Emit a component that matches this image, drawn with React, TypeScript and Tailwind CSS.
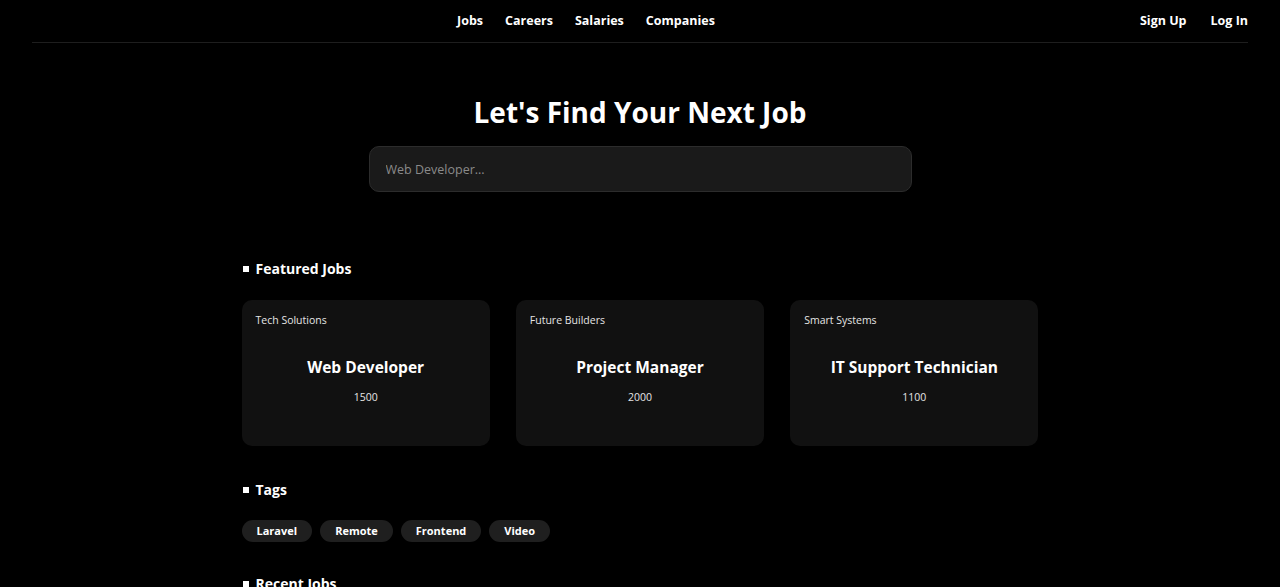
const jobs = [
  { company: "Tech Solutions", title: "Web Developer", salary: "1500" },
  { company: "Future Builders", title: "Project Manager", salary: "2000" },
  { company: "Smart Systems", title: "IT Support Technician", salary: "1100" },
];

const tags = ["Laravel", "Remote", "Frontend", "Video"];

function SectionTitle({ children }: { children: string }) {
  return (
    <h2 className="flex items-center gap-[7px] text-[14px] font-bold text-white leading-none">
      <span className="w-[6px] h-[6px] bg-white ml-px" />
      {children}
    </h2>
  );
}

export default function App() {
  return (
    <main
      className="min-h-screen bg-black text-white"
      style={{ fontFamily: '"Open Sans", "Noto Sans", sans-serif' }}
    >
      {/* Header */}
      <header className="px-8">
        <div className="flex justify-between items-center h-[43px] border-b border-[#1e1e1e]">
          <div />
          <nav className="flex gap-[22px] text-[12.5px] font-bold">
            <a>Jobs</a>
            <a>Careers</a>
            <a>Salaries</a>
            <a>Companies</a>
          </nav>
          <div className="flex gap-[24px] text-[12.5px] font-bold">
            <a>Sign Up</a>
            <a>Log In</a>
          </div>
        </div>
      </header>

      {/* Hero */}
      <section className="flex flex-col items-center pt-[55px]">
        <h1 className="text-[28px] font-bold leading-none">Let's Find Your Next Job</h1>
        <input
          placeholder="Web Developer..."
          className="mt-[20px] w-[543px] h-[46px] px-4 rounded-[10px] bg-[#1a1a1a] border border-[#2c2c2c] text-[12.5px] text-white placeholder:text-[#8a8a8a] outline-none"
        />
      </section>

      {/* Content */}
      <div className="w-[797px] mx-auto pt-[70px]">
        <SectionTitle>Featured Jobs</SectionTitle>
        <div className="grid grid-cols-3 gap-[26px] mt-[24px]">
          {jobs.map((job) => (
            <div key={job.title} className="h-[146px] rounded-[10px] bg-[#111111] px-[14px] pt-[13px]">
              <p className="text-[10.5px] text-[#e5e5e5]">{job.company}</p>
              <div className="flex flex-col items-center mt-[27px]">
                <h3 className="text-[15.5px] font-bold">{job.title}</h3>
                <p className="mt-[11px] text-[10.5px] text-[#e5e5e5]">{job.salary}</p>
              </div>
            </div>
          ))}
        </div>

        <div className="mt-[37px]">
          <SectionTitle>Tags</SectionTitle>
        </div>
        <div className="flex gap-[8px] mt-[23px]">
          {tags.map((t) => (
            <span key={t} className="h-[22px] px-[15px] flex items-center rounded-full bg-[#1f1f1f] text-[11px] font-bold">
              {t}
            </span>
          ))}
        </div>

        <div className="mt-[35px]">
          <SectionTitle>Recent Jobs</SectionTitle>
        </div>
      </div>
    </main>
  );
}
